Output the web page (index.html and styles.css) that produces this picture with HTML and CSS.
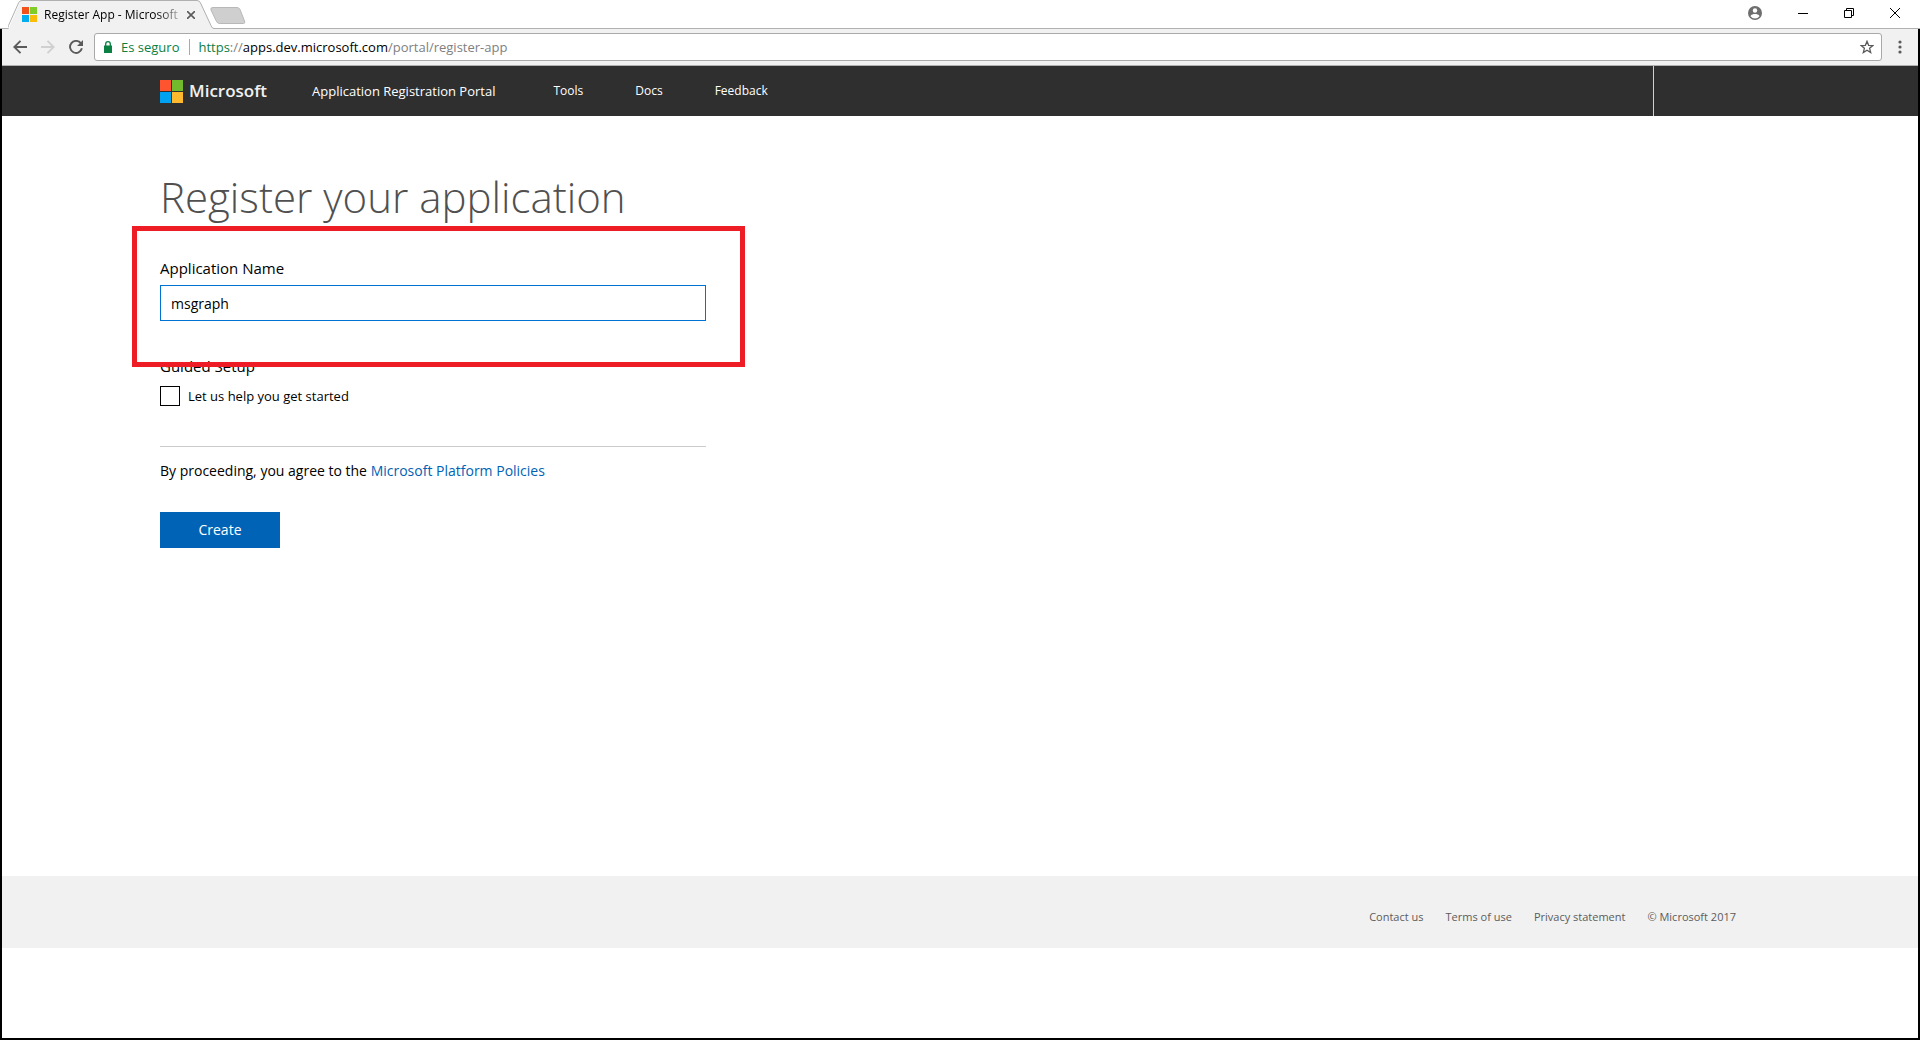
FILE: index.html
```html
<!DOCTYPE html>
<html lang="en">
<head>
<meta charset="utf-8">
<title>Register App - Microsoft</title>
<link rel="stylesheet" href="styles.css">
</head>
<body>
<div class="tabstrip">
  <div class="tab">
    <svg class="tab-shape" width="206" height="29" viewBox="0 0 206 29" aria-hidden="true"><path d="M0 28.500 C2 28.500 1 27.500 2 25.500 L11.500 3 Q12.500 .5 15 .5 H189 Q191.500 .5 192.500 3 L203 25.500 Q204 28.500 206 28.500 V29 H0Z" fill="#f1f1f1"/><path d="M0 28.500 Q-.5 28.500 .500 25.500 L10.500 3 Q11.500 .5 14 .5 H189 Q191.500 .5 192.500 3 L203 25.500 Q204 28.500 206 28.500" fill="none" stroke="#b0b0b0"/></svg>
    <svg class="favicon" width="15" height="15" viewBox="0 0 15 15" aria-hidden="true"><path fill="#f1511b" d="M0 0h7v7H0z"/><path fill="#80cc28" d="M8 0h7v7H8z"/><path fill="#00adef" d="M0 8h7v7H0z"/><path fill="#fbbc09" d="M8 8h7v7H8z"/></svg>
    <span class="tab-title">Register App - Microsoft</span>
    <button class="icon-button" aria-label="Close tab"><svg width="8" height="8" viewBox="0 0 8 8"><path d="M0 0l8 8M8 0L0 8" stroke="#5a5a5a" stroke-width="1.600"/></svg></button>
  </div>
  <button class="icon-button" aria-label="New tab"><svg width="36" height="19" viewBox="0 0 36 19"><path d="M3 2.500h24q2 0 3 2l4.500 11.500q1 2.500-1 2.500H9.500q-2 0-3-2L1 5q-1-2.500 2-2.500z" fill="#cfcfcf" stroke="#b8b8b8"/></svg></button>
  <div class="window-buttons">
    <button class="icon-button" aria-label="Profile"><svg width="14" height="14" viewBox="0 0 14 14"><circle cx="7" cy="7" r="7" fill="#6e6e6e"/><circle cx="7" cy="4.500" r="2.200" fill="#fff"/><path d="M2.500 10.200C3 8.200 5.500 7.900 7 7.900s4 .3 4.500 2.300Q9.800 12.500 7 12.500T2.500 10.200z" fill="#fff"/></svg></button>
    <button class="icon-button" aria-label="Minimize"><svg width="10" height="10" viewBox="0 0 10 10"><path d="M0 5.500h10" stroke="#000"/></svg></button>
    <button class="icon-button" aria-label="Restore"><svg width="10" height="10" viewBox="0 0 10 10"><path d="M.5 2.500h7v7h-7zM2.500 2V.5h7v7H8" fill="none" stroke="#000"/></svg></button>
    <button class="icon-button" aria-label="Close"><svg width="10" height="10" viewBox="0 0 10 10"><path d="M0 0l10 10M10 0L0 10" stroke="#000"/></svg></button>
  </div>
</div>
<div class="window">
  <div class="toolbar">
    <button class="icon-button" aria-label="Back"><svg width="14" height="14" viewBox="0 0 14 14"><path d="M14 7H1.500M7.500 .8L1.300 7l6.200 6.200" fill="none" stroke="#5a5a5a" stroke-width="1.900"/></svg></button>
    <button class="icon-button" aria-label="Forward"><svg width="14" height="14" viewBox="0 0 14 14"><path d="M0 7h12.500M6.500 .8L12.700 7l-6.200 6.200" fill="none" stroke="#d0d0d0" stroke-width="1.900"/></svg></button>
    <button class="icon-button" aria-label="Reload"><svg width="14" height="14" viewBox="0 0 14 14"><path d="M11.800 3.200A6 6 0 1 0 12.900 8.300" fill="none" stroke="#5a5a5a" stroke-width="1.900"/><path d="M14 0v6H8z" fill="#5a5a5a"/></svg></button>
    <div class="omnibox">
      <svg width="8" height="12" viewBox="0 0 8 12" aria-hidden="true"><path d="M0 4.500h8V12H0z" fill="#0b8043"/><path d="M1.700 5V3a2.300 2.300 0 0 1 4.600 0v2" fill="none" stroke="#0b8043" stroke-width="1.300"/></svg>
      <span class="secure">Es seguro</span>
      <span class="url"><span class="scheme">https</span>://<span class="host">apps.dev.microsoft.com</span>/portal/register-app</span>
      <button class="icon-button" aria-label="Bookmark"><svg width="14" height="14" viewBox="0 0 14 14"><path d="M7 1.300l1.600 4 4.300.3-3.300 2.700 1.100 4.200L7 10.200l-3.700 2.300 1.100-4.200L1.100 5.600l4.300-.3z" fill="none" stroke="#5a5a5a" stroke-width="1.300"/></svg></button>
    </div>
    <button class="icon-button" aria-label="Menu"><svg width="4" height="14" viewBox="0 0 4 14"><g fill="#5a5a5a"><circle cx="2" cy="2" r="1.600"/><circle cx="2" cy="7" r="1.600"/><circle cx="2" cy="12" r="1.600"/></g></svg></button>
  </div>
  <header class="site-header">
    <a class="brand" href="#">
      <svg width="23" height="23" viewBox="0 0 23 23" aria-hidden="true"><path fill="#ff5430" d="M0 0h11v11H0z"/><path fill="#72bb2c" d="M12 0h11v11H12z"/><path fill="#00a1f1" d="M0 12h11v11H0z"/><path fill="#ffb92f" d="M12 12h11v11H12z"/></svg>
      <span>Microsoft</span>
    </a>
    <nav class="site-nav">
      <a class="portal" href="#">Application Registration Portal</a>
      <a href="#">Tools</a>
      <a href="#">Docs</a>
      <a href="#">Feedback</a>
    </nav>
    <div class="account"></div>
  </header>
  <main class="content">
    <h1>Register your application</h1>
    <form class="form">
      <div class="name-field">
        <label for="app-name">Application Name</label>
        <input class="text-input" id="app-name" type="text" value="msgraph">
        <div class="highlight"></div>
      </div>
      <fieldset class="guided">
        <legend>Guided Setup</legend>
        <label class="check"><input type="checkbox">Let us help you get started</label>
      </fieldset>
      <p class="terms">By proceeding, you agree to the <a href="#">Microsoft Platform Policies</a></p>
      <button class="create" type="button">Create</button>
    </form>
  </main>
  <footer class="site-footer">
    <a href="#">Contact us</a>
    <a href="#">Terms of use</a>
    <a href="#">Privacy statement</a>
    <span>© Microsoft 2017</span>
  </footer>
</div>
</body>
</html>
```
FILE: styles.css
```css
* { box-sizing: border-box; }

body {
  margin: 0;
  min-height: 100vh;
  display: flex;
  flex-direction: column;
  background: #fff;
  color: #000;
  font: 14px/20px "Open Sans", "Noto Sans", sans-serif;
}

a { color: inherit; text-decoration: none; }
svg { display: block; flex: none; }

.icon-button {
  flex: none;
  padding: 0;
  border: 0;
  background: none;
}

/* browser chrome */
.tabstrip {
  display: flex;
  align-items: center;
  height: 29px;
  padding-left: 8px;
  box-shadow: inset 0 -1px #b0b0b0;
}

.tab {
  position: relative;
  display: flex;
  align-items: center;
  width: 202px;
  height: 29px;
  padding-left: 14px;
}

.tab-shape { position: absolute; left: 0; top: 0; }
.favicon, .tab-title, .tab .icon-button { position: relative; }

.tab-title {
  width: 136px;
  margin: 0 7px;
  white-space: nowrap;
  font-size: 12px;
  -webkit-mask-image: linear-gradient(to right, #000 112px, transparent 144px);
  mask-image: linear-gradient(to right, #000 112px, transparent 144px);
}

.window-buttons {
  display: flex;
  align-self: flex-start;
  align-items: center;
  gap: 36px;
  height: 26px;
  margin-left: auto;
  padding-right: 20px;
}

.window {
  flex: 1;
  display: flex;
  flex-direction: column;
  border: solid #000;
  border-width: 0 2px 2px;
}

.toolbar {
  display: flex;
  align-items: center;
  gap: 14px;
  height: 37px;
  padding: 0 16px 0 11px;
  background: #f1f1f1;
  border-bottom: 1px solid #b0b0b0;
}

.omnibox {
  flex: 1;
  display: flex;
  align-items: center;
  height: 28px;
  margin: 0 2px 0 -3px;
  padding: 0 7px 0 9px;
  background: #fff;
  border: 1px solid #a9a9a9;
  border-radius: 3px;
  font-size: 13px;
}

.secure {
  margin-left: 9px;
  padding-right: 10px;
  line-height: 16px;
  border-right: 1px solid #a9a9a9;
  color: #0b8043;
}

.url { flex: 1; margin-left: 8px; color: #808080; }
.scheme { color: #0b8043; }
.host { color: #000; }

/* site header */
.site-header {
  display: flex;
  align-items: center;
  height: 50px;
  padding-left: 158px;
  background: #2f2f2f;
  color: #fff;
}

.brand {
  display: flex;
  align-items: center;
  gap: 6px;
  width: 152px;
  color: #f0f0f0;
  font-size: 17px;
  font-weight: 600;
}

.site-nav {
  display: flex;
  align-items: center;
  gap: 52px;
  font-size: 12px;
}

.portal { margin-right: 6px; font-size: 13px; }

.account {
  align-self: stretch;
  width: 265px;
  margin-left: auto;
  border-left: 1px solid #d0d0d0;
}

/* page */
.content { flex: 1; padding: 51px 158px 0; }

h1 {
  margin: 0 0 31px;
  color: #505050;
  font-size: 42px;
  line-height: 60px;
  font-weight: 300;
}

.form { width: 546px; }

.name-field { position: relative; margin-bottom: 35px; }
.name-field label { display: block; margin-bottom: 7px; font-size: 15px; }

.text-input {
  display: block;
  width: 100%;
  height: 36px;
  padding: 0 10px;
  border: 1px solid #0072d2;
  outline: 0;
  background: #fff;
  color: #000;
  font: inherit;
}

.highlight {
  position: absolute;
  top: -32px;
  right: -39px;
  bottom: -46px;
  left: -28px;
  border: 5px solid #ee1c25;
  pointer-events: none;
}

.guided {
  margin: 0 0 14px;
  padding: 0 0 40px;
  border: 0;
  border-bottom: 1px solid #ccc;
}

.guided legend { padding: 0; margin-bottom: 10px; font-size: 15px; }

.check {
  display: flex;
  align-items: center;
  gap: 8px;
  font-size: 13px;
}

.check input {
  appearance: none;
  width: 20px;
  height: 20px;
  margin: 0;
  border: 1px solid #000;
}

.terms { margin: 0 0 31px; }
.terms a { color: #0062b5; }

.create {
  display: block;
  width: 120px;
  height: 36px;
  padding: 0;
  border: 0;
  background: #0063b6;
  color: #fff;
  font: inherit;
}

.site-footer {
  display: flex;
  align-items: center;
  justify-content: flex-end;
  gap: 22px;
  height: 72px;
  margin-bottom: 90px;
  padding: 10px 182px 0 0;
  background: #f1f1f1;
  color: #5c5c5c;
  font-size: 11px;
}
```
